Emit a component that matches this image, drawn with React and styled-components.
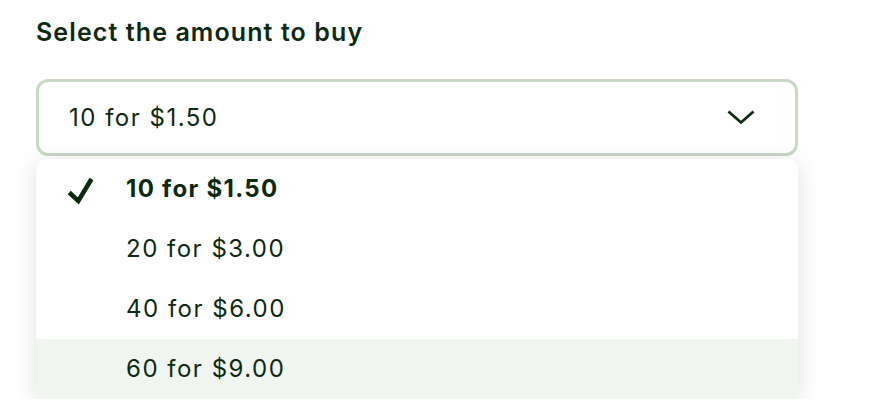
import React from 'react';
import styled, { createGlobalStyle } from 'styled-components';

const Global = createGlobalStyle`
	body {
		margin: 0;
		background: #fff;
		font-family: Inter, "Liberation Sans", sans-serif;
		color: #0b2a10;
	}
`;

const Page = styled.div`
	padding: 17px 78px 0 36px;
	display: flex;
	flex-direction: column;
`;

const Label = styled.h2`
	margin: 0 0 32px;
	font-size: 25px;
	line-height: 30px;
	font-weight: 600;
	letter-spacing: 1.1px;
`;

const Field = styled.div`
	display: flex;
	flex-direction: column;
`;

const Trigger = styled.button`
	display: flex;
	align-items: center;
	justify-content: space-between;
	box-sizing: border-box;
	height: 77px;
	padding: 0 40px 0 30px;
	border: 3px solid #c8d8c5;
	border-radius: 12px;
	background: #fff;
	font: inherit;
	font-size: 24px;
	letter-spacing: 1.5px;
	color: inherit;
	text-align: left;
`;

const Menu = styled.ul`
	list-style: none;
	margin: 3px 0 0;
	padding: 0;
	background: #fff;
	border-radius: 10px;
	overflow: hidden;
	box-shadow: 0 4px 22px rgba(0, 0, 0, 0.13);
`;

const Item = styled.li`
	display: flex;
	align-items: center;
	height: 60px;
	padding: 0 0 2px 30px;
	box-sizing: border-box;
	font-size: 24px;
	letter-spacing: ${(p) => (p.$selected ? '1.3px' : '1.5px')};
	font-weight: ${(p) => (p.$selected ? 700 : 400)};
	background: ${(p) => (p.$hover ? '#f0f5ef' : '#fff')};
`;

const CheckSlot = styled.span`
	flex: none;
	width: 60px;
	display: flex;
	align-items: center;
	padding-top: 4px;
`;

const options = ['10 for $1.50', '20 for $3.00', '40 for $6.00', '60 for $9.00'];

export default function App() {
	return (
		<>
			<Global />
			<Page>
				<Label>Select the amount to buy</Label>
				<Field>
					<Trigger>
						<span>10 for $1.50</span>
						<svg width="28" height="15" viewBox="0 0 28 15" fill="none">
							<path d="M1.5 1.5L14 12.5L26.5 1.5" stroke="#0b2a10" strokeWidth="2.8" />
						</svg>
					</Trigger>
					<Menu>
						{options.map((o, i) => (
							<Item key={o} $selected={i === 0} $hover={i === 3}>
								<CheckSlot>
									{i === 0 && (
										<svg width="28" height="29" viewBox="0 0 28 29">
											<path d="M3.2 16.5L12.3 25L25.5 3" stroke="#0b2a10" strokeWidth="4.6" fill="none" />
										</svg>
									)}
								</CheckSlot>
								{o}
							</Item>
						))}
					</Menu>
				</Field>
			</Page>
		</>
	);
}
